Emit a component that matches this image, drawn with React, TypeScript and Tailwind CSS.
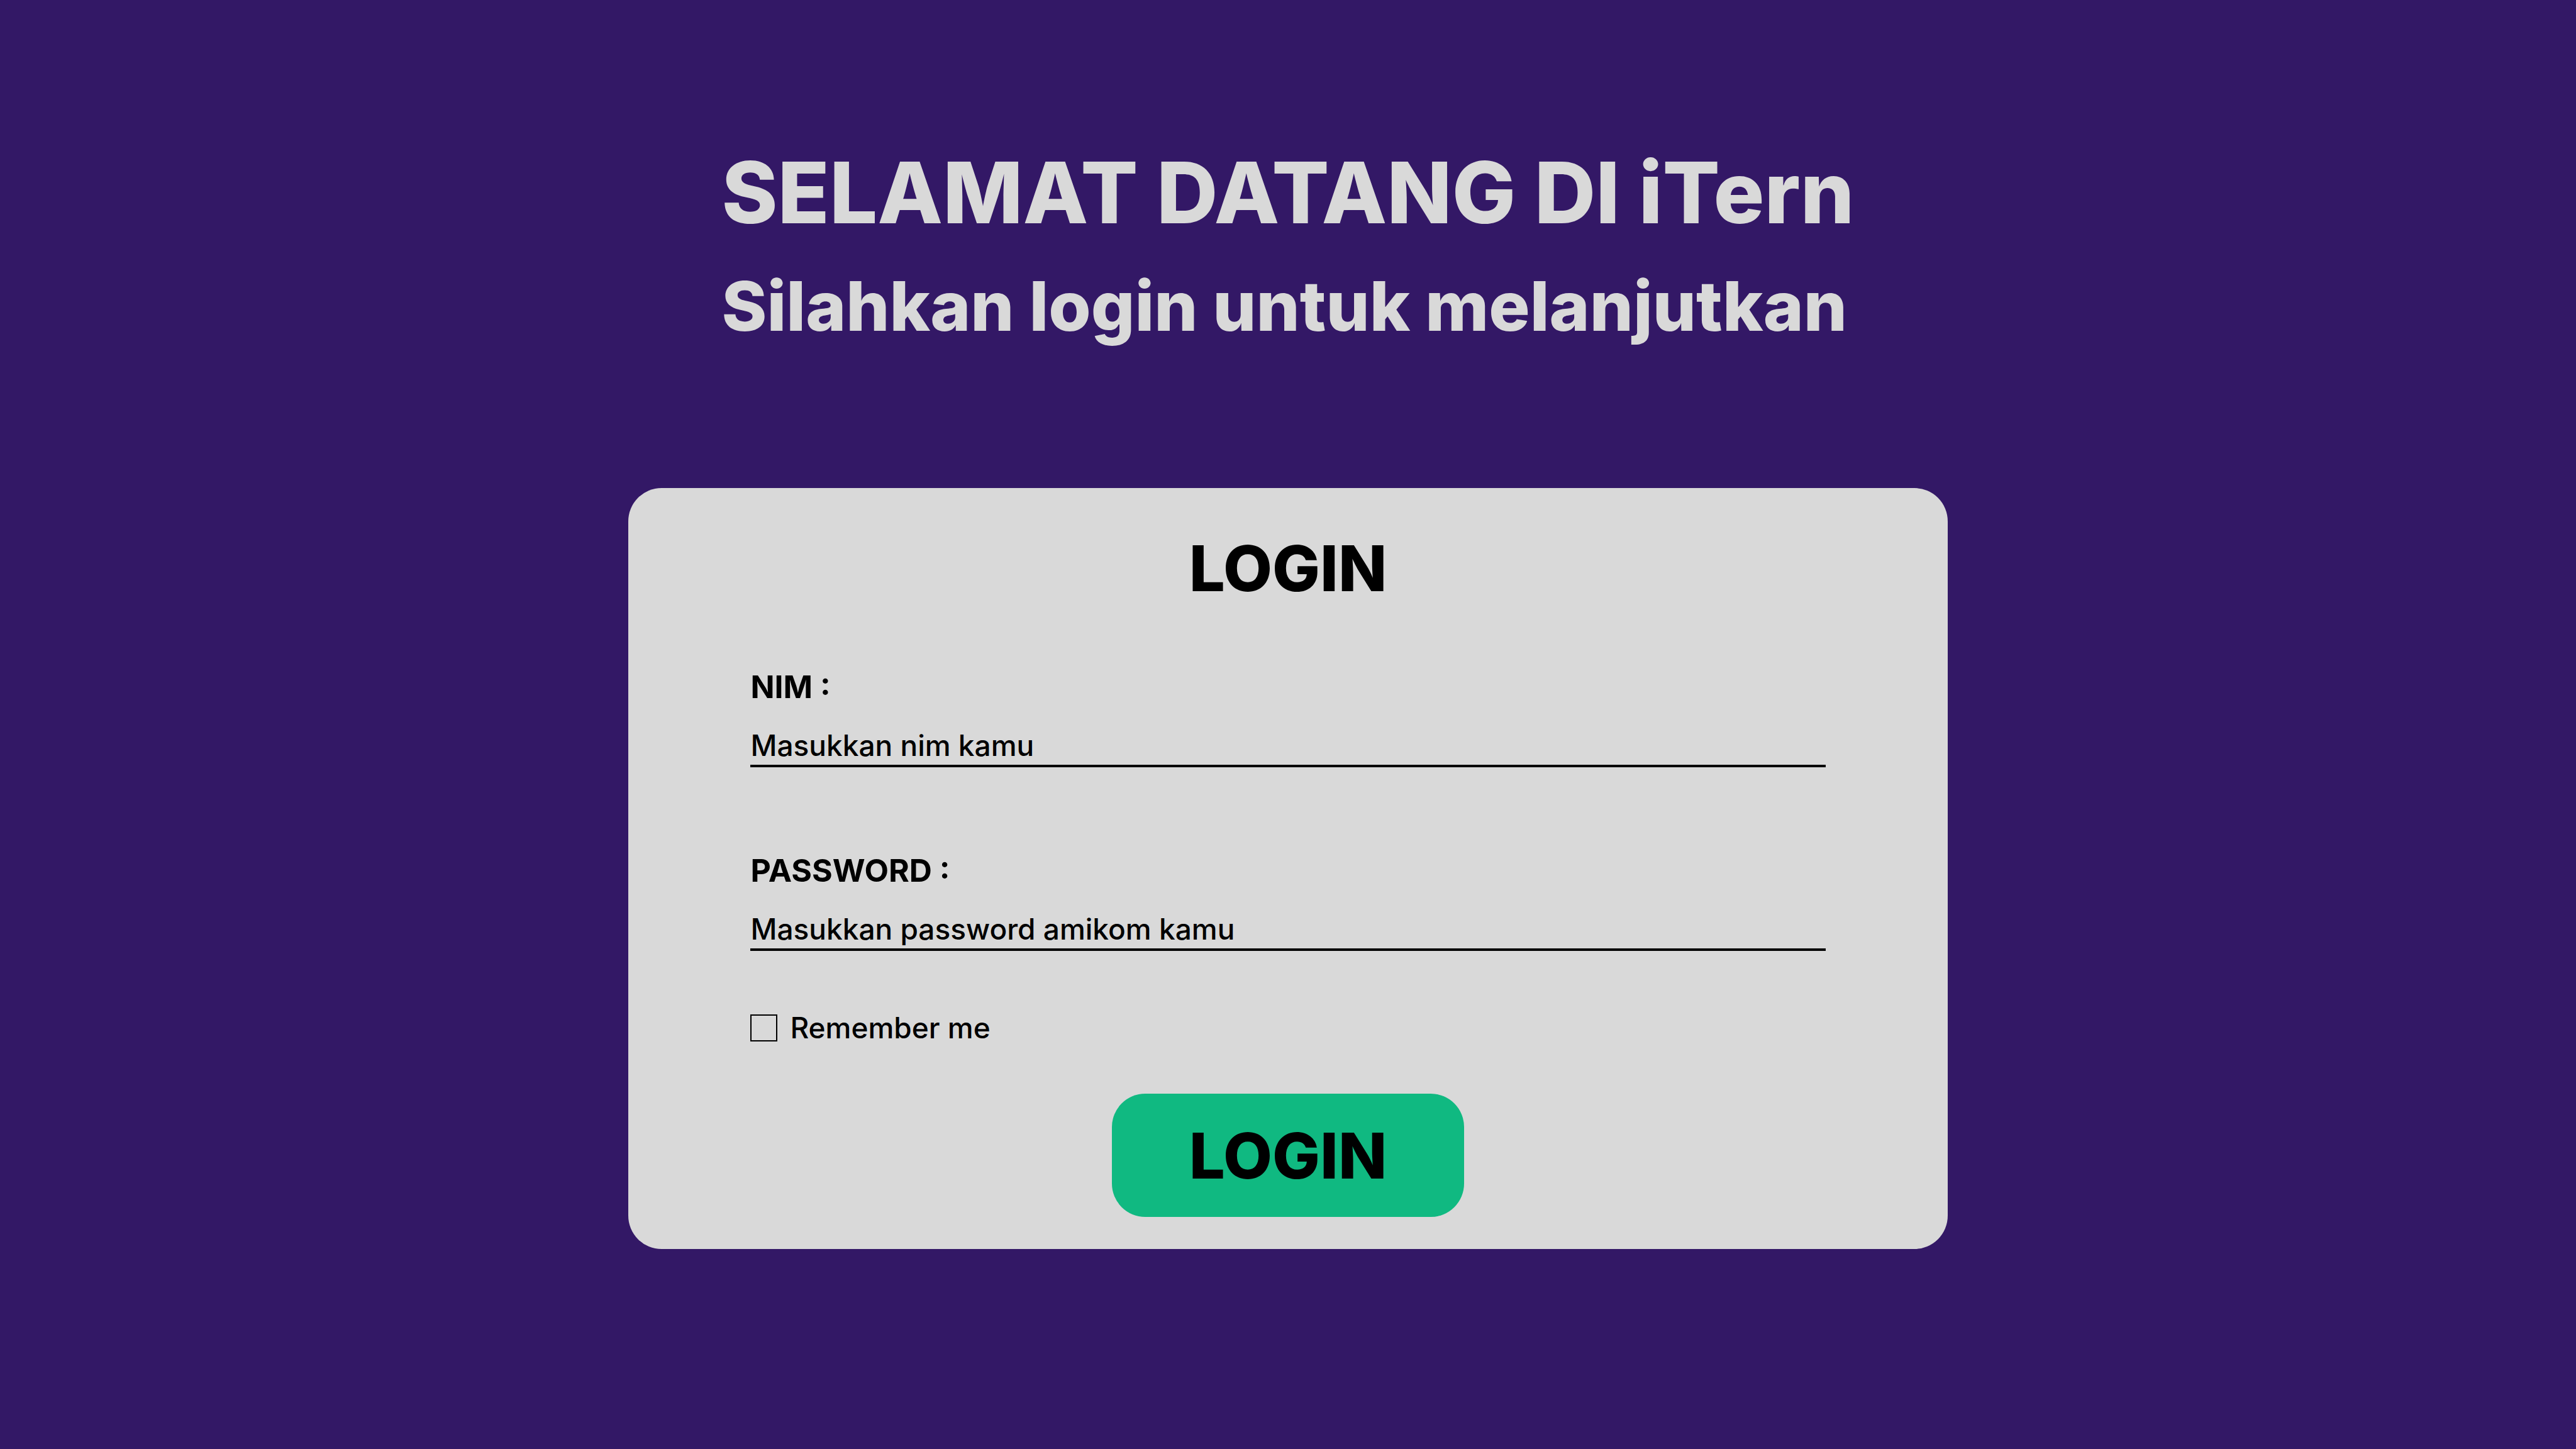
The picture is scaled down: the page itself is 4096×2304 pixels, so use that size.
import { useState } from "react";

type FieldProps = {
  id: string;
  label: string;
  placeholder: string;
  type: "text" | "password";
};

function Field({ id, label, placeholder, type }: FieldProps) {
  return (
    <div className="flex flex-col">
      <label htmlFor={id} className="text-[50px] leading-[76px] font-bold">
        {label}
      </label>
      <input
        id={id}
        name={id}
        type={type}
        placeholder={placeholder}
        className="mt-6 h-[66px] w-full border-b-4 border-black bg-transparent text-[46px] font-medium text-black outline-none placeholder:text-black placeholder:opacity-100"
      />
    </div>
  );
}

export default function App() {
  const [remember, setRemember] = useState(false);

  return (
    <main className="flex min-h-screen flex-col items-center bg-[#331866] pt-[204px] pb-20 font-['Inter',sans-serif] text-black">
      <header className="text-[#d9d9d9]">
        <h1 className="text-[135px] leading-[204px] font-extrabold">SELAMAT DATANG DI iTern</h1>
        <p className="text-[109px] leading-[156px] font-extrabold">Silahkan login untuk melanjutkan</p>
      </header>

      <form
        onSubmit={(event) => event.preventDefault()}
        className="mt-[212px] flex w-[51.2%] flex-col rounded-[53px] bg-[#d9d9d9] px-[194px] pt-[50px] pb-[51px]"
      >
        <h2 className="text-center text-[101px] leading-[154px] font-extrabold">LOGIN</h2>

        <div className="mt-[74px] flex flex-col gap-[126px]">
          <Field id="nim" label="NIM :" placeholder="Masukkan nim kamu" type="text" />
          <Field id="password" label="PASSWORD :" placeholder="Masukkan password amikom kamu" type="password" />
        </div>

        <label htmlFor="remember" className="mt-[101px] flex items-center gap-5 self-start text-[46px] leading-[43px] font-medium">
          <input
            id="remember"
            type="checkbox"
            checked={remember}
            onChange={(event) => setRemember(event.target.checked)}
            className="size-[43px] appearance-none border-2 border-black checked:bg-black"
          />
          Remember me
        </label>

        <button
          type="submit"
          className="mt-[83px] self-center rounded-[53px] bg-[#10b981] px-[123px] py-[21px] text-[101px] leading-[154px] font-extrabold"
        >
          LOGIN
        </button>
      </form>
    </main>
  );
}
